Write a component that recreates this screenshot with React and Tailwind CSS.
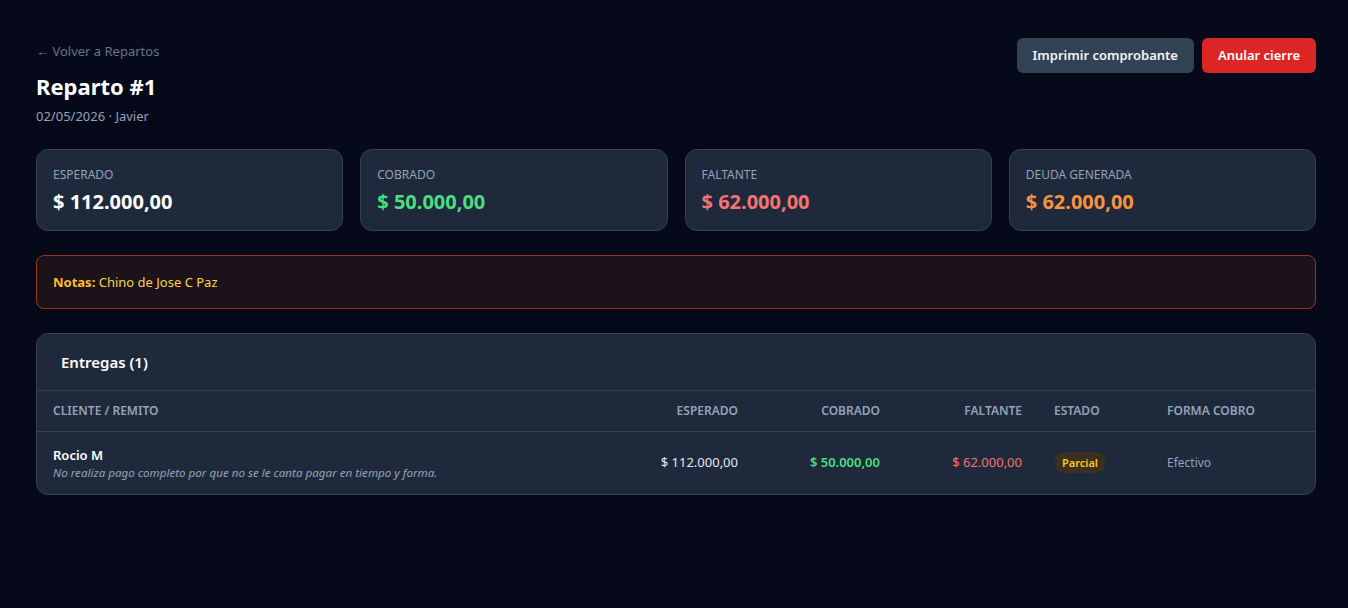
const summary = [
  { label: 'Esperado', value: '$ 112.000,00', tone: 'text-white' },
  { label: 'Cobrado', value: '$ 50.000,00', tone: 'text-[#4ade80]' },
  { label: 'Faltante', value: '$ 62.000,00', tone: 'text-[#f87171]' },
  { label: 'Deuda generada', value: '$ 62.000,00', tone: 'text-[#fb923c]' },
];

const entregas = [
  {
    id: 1,
    cliente: 'Rocio M',
    nota: 'No realiza pago completo por que no se le canta pagar en tiempo y forma.',
    esperado: '$ 112.000,00',
    cobrado: '$ 50.000,00',
    faltante: '$ 62.000,00',
    estado: 'Parcial',
    forma: 'Efectivo',
  },
];

const cols = 'grid grid-cols-[1fr_142px_142px_142px_113px_164px]';

const SummaryCard = ({ label, value, tone }) => (
  <div className="rounded-xl border border-[#334155] bg-[#1e293b] px-4 pt-[17px] pb-[14px]">
    <p className="text-[12px] uppercase leading-4 text-[#94a3b8]">{label}</p>
    <p className={`mt-[5px] text-[20px] font-bold leading-7 ${tone}`}>{value}</p>
  </div>
);

export default function App() {
  return (
    <div
      className="min-h-screen bg-[#060919] text-white"
      style={{ fontFamily: '"Segoe UI", "Noto Sans", sans-serif' }}
    >
      <div className="pl-9 pr-8 pt-[39px]">
        <div className="flex items-start justify-between">
          <div>
            <a className="block text-[13px] leading-6 text-[#64748b]">← Volver a Repartos</a>
            <h1 className="mt-[7px] text-[22px] font-bold leading-8">Reparto #1</h1>
            <p className="mt-[4px] text-[13px] leading-5 text-[#94a3b8]">02/05/2026 · Javier</p>
          </div>
          <div className="-mt-px flex gap-2">
            <button className="h-[35px] rounded-md bg-[#334155] px-4 text-[13px] font-semibold text-[#f1f5f9]">
              Imprimir comprobante
            </button>
            <button className="h-[35px] rounded-md bg-[#dc2626] px-4 text-[13px] font-semibold text-white">
              Anular cierre
            </button>
          </div>
        </div>

        <div className="mt-[23px] grid grid-cols-4 gap-[17px]">
          {summary.map((s) => (
            <SummaryCard key={s.label} {...s} />
          ))}
        </div>

        <div className="mt-6 rounded-lg border border-[#9a3412] bg-[#1c1219] px-4 py-[16px] text-[13px] leading-5 text-[#fcd34d]">
          <span className="font-bold text-[#fbbf24]">Notas:</span> Chino de Jose C Paz
        </div>

        <div className="mt-6 overflow-hidden rounded-xl border border-[#334155] bg-[#1e293b]">
          <div className="border-b border-[#334155] px-6 py-[16px]">
            <h2 className="text-[15px] font-semibold leading-6">Entregas ({entregas.length})</h2>
          </div>
          <div
            className={`${cols} border-b border-[#334155] py-[12px] text-[12px] font-semibold uppercase leading-4 text-[#94a3b8]`}
          >
            <div className="px-4">Cliente / Remito</div>
            <div className="px-4 text-right">Esperado</div>
            <div className="px-4 text-right">Cobrado</div>
            <div className="px-4 text-right">Faltante</div>
            <div className="px-4">Estado</div>
            <div className="px-4">Forma cobro</div>
          </div>
          {entregas.map((e) => (
            <div key={e.id} className={`${cols} items-center py-[13px] text-[13px]`}>
              <div className="px-4">
                <p className="font-semibold leading-5 text-white">{e.cliente}</p>
                <p className="text-[11.6px] italic leading-4 text-[#94a3b8]">{e.nota}</p>
              </div>
              <div className="px-4 text-right text-[#e2e8f0]">{e.esperado}</div>
              <div className="px-4 text-right font-semibold text-[#4ade80]">{e.cobrado}</div>
              <div className="px-4 text-right text-[#f87171]">{e.faltante}</div>
              <div className="px-4">
                <span className="rounded-full bg-[#3a2f22] px-2 py-[3px] text-[11px] font-semibold text-[#facc15]">
                  {e.estado}
                </span>
              </div>
              <div className="px-4 text-[12px] text-[#94a3b8]">{e.forma}</div>
            </div>
          ))}
        </div>
      </div>
    </div>
  );
}
